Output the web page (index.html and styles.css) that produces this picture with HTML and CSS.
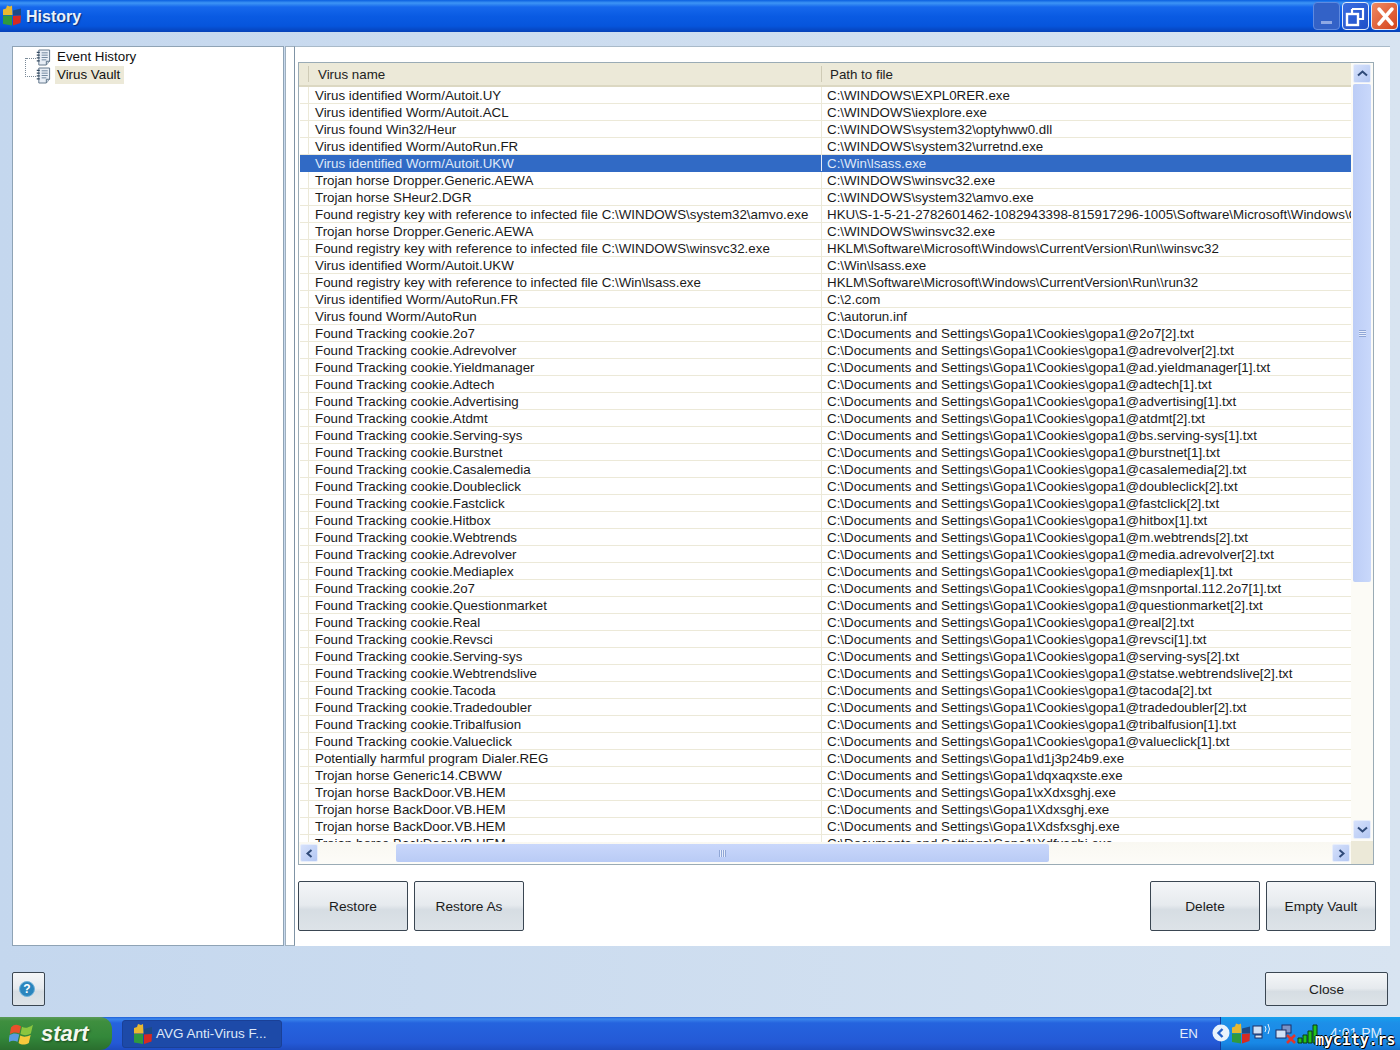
FILE: index.html
```html
<!DOCTYPE html>
<html lang="en">
<head>
<meta charset="utf-8">
<title>History</title>
<link rel="stylesheet" href="styles.css">
</head>
<body>
<svg class="defs" width="0" height="0" aria-hidden="true">
  <defs>
    <symbol id="avg" viewBox="0 0 20 20">
      <path d="M1 4 L4 3 L5 0 L8 1 L10 0 L10.500 9.500 L1 9.500Z" fill="#e8b830"/>
      <path d="M11 5 L19 3 L19 10 L11 10Z" fill="#1c4a86"/>
      <path d="M1 10 L10 10 L10 20 L1 18.500Z" fill="#2f9a3e"/>
      <path d="M11 10.500 L19 10 L18.500 17.500 L11 20Z" fill="#d62a22"/>
    </symbol>
    <symbol id="note" viewBox="0 0 16 17">
      <path d="M3 .5H14.500V12.500L11 16.500H3Z" fill="#e8eef6" stroke="#5d7288"/>
      <path d="M.8 3H4M.8 6H4M.8 9H4M.8 12H4" stroke="#33495f" stroke-width="1.300"/>
      <path d="M6 3.500H12.500M6 6H12.500M6 8.500H12.500M6 11H11" stroke="#6b829a"/>
      <path d="M11 16.500V12.500H14.500" fill="#c7d3df" stroke="#5d7288"/>
    </symbol>
    <symbol id="flag" viewBox="0 0 24 24">
      <path d="M2 6 C5 3 8 3 11.500 5 L10 12 C7 10.500 4 10.500 .8 12.500Z" fill="#e8502a"/>
      <path d="M12.500 5.500 C15 7 18 7 23 3.500 L21 12 C17.500 14 14 14 11 12.500Z" fill="#8cc63f"/>
      <path d="M.6 13.500 C4 11.500 6.500 11.500 9.800 13 L8.200 20 C5 18.500 2.500 18.500 -.8 20.500Z" fill="#5b9be0"/>
      <path d="M10.800 14 C13.500 15.500 16.500 15.500 20.800 13.500 L19 21 C15.500 23 12 23 9.200 21Z" fill="#f7c93c"/>
    </symbol>
  </defs>
</svg>

<header class="titlebar">
  <svg class="title-logo"><use href="#avg"/></svg>
  <span class="title-text">History</span>
  <div class="win-buttons">
    <div class="win-btn win-min"><i class="min-bar"></i></div>
    <div class="win-btn win-max">
      <svg width="24" height="24" viewBox="0 0 24 24"><path d="M8 5H19V15H15M8 5V9" fill="none" stroke="#fff" stroke-width="2.200"/><rect x="3" y="10" width="11" height="11" fill="none" stroke="#fff" stroke-width="2.400"/></svg>
    </div>
    <div class="win-btn win-close">
      <svg width="24" height="24" viewBox="0 0 24 24"><path d="M6 5L19 20M19 5L6 20" stroke="#fff" stroke-width="3.500" stroke-linecap="round"/></svg>
    </div>
  </div>
</header>

<main class="client">
  <div class="panes">
    <nav class="tree">
      <div class="tree-lines"></div>
      <div class="tree-item"><svg class="tree-icon"><use href="#note"/></svg><span class="tree-label">Event History</span></div>
      <div class="tree-item"><svg class="tree-icon"><use href="#note"/></svg><span class="tree-label tree-label-active">Virus Vault</span></div>
    </nav>
    <div class="splitter"></div>
    <section class="content">
      <div class="grid-box">
        <div class="grid-main">
          <div class="grid-head">
            <div class="cell-lead"></div>
            <div class="head-name">Virus name</div>
            <div class="head-path">Path to file</div>
          </div>
          <div class="grid-rows">
            <div class="row"><div class="cell-lead"></div><div class="cell-name">Virus identified Worm/Autoit.UY</div><div class="cell-path">C:\WINDOWS\EXPL0RER.exe</div></div>
            <div class="row"><div class="cell-lead"></div><div class="cell-name">Virus identified Worm/Autoit.ACL</div><div class="cell-path">C:\WINDOWS\iexplore.exe</div></div>
            <div class="row"><div class="cell-lead"></div><div class="cell-name">Virus found Win32/Heur</div><div class="cell-path">C:\WINDOWS\system32\optyhww0.dll</div></div>
            <div class="row"><div class="cell-lead"></div><div class="cell-name">Virus identified Worm/AutoRun.FR</div><div class="cell-path">C:\WINDOWS\system32\urretnd.exe</div></div>
            <div class="row row-selected"><div class="cell-lead"></div><div class="cell-name">Virus identified Worm/Autoit.UKW</div><div class="cell-path">C:\Win\lsass.exe</div></div>
            <div class="row"><div class="cell-lead"></div><div class="cell-name">Trojan horse Dropper.Generic.AEWA</div><div class="cell-path">C:\WINDOWS\winsvc32.exe</div></div>
            <div class="row"><div class="cell-lead"></div><div class="cell-name">Trojan horse SHeur2.DGR</div><div class="cell-path">C:\WINDOWS\system32\amvo.exe</div></div>
            <div class="row"><div class="cell-lead"></div><div class="cell-name">Found registry key with reference to infected file C:\WINDOWS\system32\amvo.exe</div><div class="cell-path">HKU\S-1-5-21-2782601462-1082943398-815917296-1005\Software\Microsoft\Windows\CurrentVersion\Run</div></div>
            <div class="row"><div class="cell-lead"></div><div class="cell-name">Trojan horse Dropper.Generic.AEWA</div><div class="cell-path">C:\WINDOWS\winsvc32.exe</div></div>
            <div class="row"><div class="cell-lead"></div><div class="cell-name">Found registry key with reference to infected file C:\WINDOWS\winsvc32.exe</div><div class="cell-path">HKLM\Software\Microsoft\Windows\CurrentVersion\Run\\winsvc32</div></div>
            <div class="row"><div class="cell-lead"></div><div class="cell-name">Virus identified Worm/Autoit.UKW</div><div class="cell-path">C:\Win\lsass.exe</div></div>
            <div class="row"><div class="cell-lead"></div><div class="cell-name">Found registry key with reference to infected file C:\Win\lsass.exe</div><div class="cell-path">HKLM\Software\Microsoft\Windows\CurrentVersion\Run\\run32</div></div>
            <div class="row"><div class="cell-lead"></div><div class="cell-name">Virus identified Worm/AutoRun.FR</div><div class="cell-path">C:\2.com</div></div>
            <div class="row"><div class="cell-lead"></div><div class="cell-name">Virus found Worm/AutoRun</div><div class="cell-path">C:\autorun.inf</div></div>
            <div class="row"><div class="cell-lead"></div><div class="cell-name">Found Tracking cookie.2o7</div><div class="cell-path">C:\Documents and Settings\Gopa1\Cookies\gopa1@2o7[2].txt</div></div>
            <div class="row"><div class="cell-lead"></div><div class="cell-name">Found Tracking cookie.Adrevolver</div><div class="cell-path">C:\Documents and Settings\Gopa1\Cookies\gopa1@adrevolver[2].txt</div></div>
            <div class="row"><div class="cell-lead"></div><div class="cell-name">Found Tracking cookie.Yieldmanager</div><div class="cell-path">C:\Documents and Settings\Gopa1\Cookies\gopa1@ad.yieldmanager[1].txt</div></div>
            <div class="row"><div class="cell-lead"></div><div class="cell-name">Found Tracking cookie.Adtech</div><div class="cell-path">C:\Documents and Settings\Gopa1\Cookies\gopa1@adtech[1].txt</div></div>
            <div class="row"><div class="cell-lead"></div><div class="cell-name">Found Tracking cookie.Advertising</div><div class="cell-path">C:\Documents and Settings\Gopa1\Cookies\gopa1@advertising[1].txt</div></div>
            <div class="row"><div class="cell-lead"></div><div class="cell-name">Found Tracking cookie.Atdmt</div><div class="cell-path">C:\Documents and Settings\Gopa1\Cookies\gopa1@atdmt[2].txt</div></div>
            <div class="row"><div class="cell-lead"></div><div class="cell-name">Found Tracking cookie.Serving-sys</div><div class="cell-path">C:\Documents and Settings\Gopa1\Cookies\gopa1@bs.serving-sys[1].txt</div></div>
            <div class="row"><div class="cell-lead"></div><div class="cell-name">Found Tracking cookie.Burstnet</div><div class="cell-path">C:\Documents and Settings\Gopa1\Cookies\gopa1@burstnet[1].txt</div></div>
            <div class="row"><div class="cell-lead"></div><div class="cell-name">Found Tracking cookie.Casalemedia</div><div class="cell-path">C:\Documents and Settings\Gopa1\Cookies\gopa1@casalemedia[2].txt</div></div>
            <div class="row"><div class="cell-lead"></div><div class="cell-name">Found Tracking cookie.Doubleclick</div><div class="cell-path">C:\Documents and Settings\Gopa1\Cookies\gopa1@doubleclick[2].txt</div></div>
            <div class="row"><div class="cell-lead"></div><div class="cell-name">Found Tracking cookie.Fastclick</div><div class="cell-path">C:\Documents and Settings\Gopa1\Cookies\gopa1@fastclick[2].txt</div></div>
            <div class="row"><div class="cell-lead"></div><div class="cell-name">Found Tracking cookie.Hitbox</div><div class="cell-path">C:\Documents and Settings\Gopa1\Cookies\gopa1@hitbox[1].txt</div></div>
            <div class="row"><div class="cell-lead"></div><div class="cell-name">Found Tracking cookie.Webtrends</div><div class="cell-path">C:\Documents and Settings\Gopa1\Cookies\gopa1@m.webtrends[2].txt</div></div>
            <div class="row"><div class="cell-lead"></div><div class="cell-name">Found Tracking cookie.Adrevolver</div><div class="cell-path">C:\Documents and Settings\Gopa1\Cookies\gopa1@media.adrevolver[2].txt</div></div>
            <div class="row"><div class="cell-lead"></div><div class="cell-name">Found Tracking cookie.Mediaplex</div><div class="cell-path">C:\Documents and Settings\Gopa1\Cookies\gopa1@mediaplex[1].txt</div></div>
            <div class="row"><div class="cell-lead"></div><div class="cell-name">Found Tracking cookie.2o7</div><div class="cell-path">C:\Documents and Settings\Gopa1\Cookies\gopa1@msnportal.112.2o7[1].txt</div></div>
            <div class="row"><div class="cell-lead"></div><div class="cell-name">Found Tracking cookie.Questionmarket</div><div class="cell-path">C:\Documents and Settings\Gopa1\Cookies\gopa1@questionmarket[2].txt</div></div>
            <div class="row"><div class="cell-lead"></div><div class="cell-name">Found Tracking cookie.Real</div><div class="cell-path">C:\Documents and Settings\Gopa1\Cookies\gopa1@real[2].txt</div></div>
            <div class="row"><div class="cell-lead"></div><div class="cell-name">Found Tracking cookie.Revsci</div><div class="cell-path">C:\Documents and Settings\Gopa1\Cookies\gopa1@revsci[1].txt</div></div>
            <div class="row"><div class="cell-lead"></div><div class="cell-name">Found Tracking cookie.Serving-sys</div><div class="cell-path">C:\Documents and Settings\Gopa1\Cookies\gopa1@serving-sys[2].txt</div></div>
            <div class="row"><div class="cell-lead"></div><div class="cell-name">Found Tracking cookie.Webtrendslive</div><div class="cell-path">C:\Documents and Settings\Gopa1\Cookies\gopa1@statse.webtrendslive[2].txt</div></div>
            <div class="row"><div class="cell-lead"></div><div class="cell-name">Found Tracking cookie.Tacoda</div><div class="cell-path">C:\Documents and Settings\Gopa1\Cookies\gopa1@tacoda[2].txt</div></div>
            <div class="row"><div class="cell-lead"></div><div class="cell-name">Found Tracking cookie.Tradedoubler</div><div class="cell-path">C:\Documents and Settings\Gopa1\Cookies\gopa1@tradedoubler[2].txt</div></div>
            <div class="row"><div class="cell-lead"></div><div class="cell-name">Found Tracking cookie.Tribalfusion</div><div class="cell-path">C:\Documents and Settings\Gopa1\Cookies\gopa1@tribalfusion[1].txt</div></div>
            <div class="row"><div class="cell-lead"></div><div class="cell-name">Found Tracking cookie.Valueclick</div><div class="cell-path">C:\Documents and Settings\Gopa1\Cookies\gopa1@valueclick[1].txt</div></div>
            <div class="row"><div class="cell-lead"></div><div class="cell-name">Potentially harmful program Dialer.REG</div><div class="cell-path">C:\Documents and Settings\Gopa1\d1j3p24b9.exe</div></div>
            <div class="row"><div class="cell-lead"></div><div class="cell-name">Trojan horse Generic14.CBWW</div><div class="cell-path">C:\Documents and Settings\Gopa1\dqxaqxste.exe</div></div>
            <div class="row"><div class="cell-lead"></div><div class="cell-name">Trojan horse BackDoor.VB.HEM</div><div class="cell-path">C:\Documents and Settings\Gopa1\xXdxsghj.exe</div></div>
            <div class="row"><div class="cell-lead"></div><div class="cell-name">Trojan horse BackDoor.VB.HEM</div><div class="cell-path">C:\Documents and Settings\Gopa1\Xdxsghj.exe</div></div>
            <div class="row"><div class="cell-lead"></div><div class="cell-name">Trojan horse BackDoor.VB.HEM</div><div class="cell-path">C:\Documents and Settings\Gopa1\Xdsfxsghj.exe</div></div>
            <div class="row"><div class="cell-lead"></div><div class="cell-name">Trojan horse BackDoor.VB.HEM</div><div class="cell-path">C:\Documents and Settings\Gopa1\Xdfxsghj.exe</div></div>
          </div>
          <div class="hscroll">
            <div class="sb-btn sb-btn-h"><svg width="9" height="9" viewBox="0 0 9 9"><path d="M6.500 1L2.500 4.500L6.500 8" class="sb-arrow"/></svg></div>
            <div class="hscroll-gap"></div>
            <div class="hscroll-thumb"><i class="grip-h"></i></div>
            <div class="hscroll-rest"></div>
            <div class="sb-btn sb-btn-h"><svg width="9" height="9" viewBox="0 0 9 9"><path d="M2.500 1L6.500 4.500L2.500 8" class="sb-arrow"/></svg></div>
          </div>
        </div>
        <div class="vscroll">
          <div class="sb-btn sb-btn-v"><svg width="11" height="9" viewBox="0 0 11 9"><path d="M1 6.500L5.500 2.500L10 6.500" class="sb-arrow"/></svg></div>
          <div class="vscroll-thumb"><i class="grip-v"></i></div>
          <div class="vscroll-rest"></div>
          <div class="sb-btn sb-btn-v"><svg width="11" height="9" viewBox="0 0 11 9"><path d="M1 2.500L5.500 6.500L10 2.500" class="sb-arrow"/></svg></div>
          <div class="vscroll-corner"></div>
        </div>
      </div>
      <div class="actions">
        <button class="btn btn-action">Restore</button>
        <button class="btn btn-action">Restore As</button>
        <div class="actions-gap"></div>
        <button class="btn btn-action">Delete</button>
        <button class="btn btn-action">Empty Vault</button>
      </div>
    </section>
  </div>
  <div class="footer">
    <button class="btn btn-help" aria-label="Help">
      <svg width="18" height="18" viewBox="0 0 18 18"><circle cx="9" cy="9" r="7.500" fill="#2a85bd"/><circle cx="9" cy="9" r="7.500" fill="none" stroke="#6fb2da"/><text x="9" y="13" class="help-mark">?</text></svg>
    </button>
    <button class="btn btn-close">Close</button>
  </div>
</main>

<footer class="taskbar">
  <div class="start"><svg class="start-flag"><use href="#flag"/></svg><span class="start-text">start</span></div>
  <div class="task"><svg class="task-logo"><use href="#avg"/></svg><span class="task-text">AVG Anti-Virus F...</span></div>
  <div class="task-spacer"></div>
  <span class="lang">EN</span>
  <div class="tray-toggle"><svg width="18" height="18" viewBox="0 0 18 18"><circle cx="9" cy="9" r="8.500" fill="#e8f2fc"/><path d="M10.500 5L6.500 9L10.500 13" fill="none" stroke="#1f5fc9" stroke-width="2.400"/></svg></div>
  <div class="tray">
    <svg class="tray-icon tray-avg"><use href="#avg"/></svg>
    <svg class="tray-icon tray-net" viewBox="0 0 20 18"><rect x="1" y="3" width="9" height="8" fill="#cfe0f5" stroke="#1c2f66"/><rect x="3" y="12" width="7" height="3" fill="#dfe7f2" stroke="#1c2f66"/><path d="M13 3Q15 6 13 9M16 1Q19 6 16 11" fill="none" stroke="#e6effa"/></svg>
    <svg class="tray-icon tray-net2" viewBox="0 0 22 20"><rect x="7" y="1" width="9" height="8" fill="#7c93c6" stroke="#1c2f66"/><rect x="1" y="6" width="10" height="8" fill="#cfe0f5" stroke="#1c2f66"/><path d="M12 11L20 19M20 11L12 19" stroke="#e3362a" stroke-width="2.500"/></svg>
    <svg class="tray-icon tray-signal" viewBox="0 0 22 20"><path d="M1 14h4v5H1ZM6 11h4v8H6ZM11 7h4v12h-4ZM16 1h4v18h-4Z" fill="#22c31c" stroke="#0c3a10"/></svg>
    <span class="clock">4:01 PM</span>
    <span class="watermark">mycity.rs</span>
  </div>
</footer>
</body>
</html>
```

FILE: styles.css
```css
* { box-sizing: border-box; }
html, body { margin: 0; padding: 0; }
body {
  width: 1400px;
  height: 1050px;
  overflow: hidden;
  display: flex;
  flex-direction: column;
  font-family: "Liberation Sans", Arial, sans-serif;
  font-size: 13.33px;
  color: #1a1a1a;
}
.defs { position: absolute; }

/* Title bar */
.titlebar {
  flex: 0 0 32px;
  display: flex;
  align-items: center;
  padding-left: 2px;
  background: linear-gradient(to bottom, #0a5fe0 0, #3d95f5 3px, #1668ec 7px, #0a5be3 16px, #0655dc 26px, #0641b8 32px);
}
.title-logo { width: 20px; height: 21px; flex: none; margin-top: -2px; }
.title-text {
  margin: 2px 0 0 4px;
  color: #eaf2fb;
  font-size: 16px;
  font-weight: bold;
  text-shadow: 1px 1px 1px #0a2c78;
}
.win-buttons { margin-left: auto; display: flex; gap: 2px; padding-right: 2px; }
.win-btn {
  width: 27px;
  height: 28px;
  border: 1px solid #e4ecf9;
  border-radius: 4px;
  display: flex;
  align-items: center;
  justify-content: center;
}
.win-min { background: #3362c7; border-color: #5f8ae0; }
.min-bar { display: block; width: 11px; height: 3px; background: #8fa9e4; margin-top: 13px; }
.win-max { background: linear-gradient(135deg, #3a6de0, #1e4fc8); }
.win-close { background: linear-gradient(135deg, #ee8a63, #d5431c); }

/* Client area */
.client {
  flex: 1;
  display: flex;
  flex-direction: column;
  padding: 14px 10px 0 12px;
  background: linear-gradient(to right, #c4d7ee, #d8e4f1);
}
.panes { flex: 0 0 900px; display: flex; }
.tree {
  flex: 0 0 272px;
  position: relative;
  padding: 2px 0 0 23px;
  background: #fff;
  border: 1px solid #8fa3b5;
}
.tree-lines {
  position: absolute;
  left: 12px;
  top: 11px;
  width: 11px;
  height: 19px;
  border-left: 1px dotted #7a8a98;
  border-bottom: 1px dotted #7a8a98;
}
.tree-lines::before {
  content: "";
  position: absolute;
  left: 0;
  top: 0;
  width: 10px;
  border-top: 1px dotted #7a8a98;
}
.tree-item { height: 18px; display: flex; align-items: flex-start; }
.tree-icon { width: 15px; height: 17px; flex: none; }
.tree-label { margin: -1px 0 0 4px; padding: 0 4px 0 2px; line-height: 18px; color: #111; }
.tree-label-active { background: #ece9d8; }
.splitter {
  flex: 0 0 10px;
  margin-left: 1px;
  background: #fff;
  border: 1px solid #9fb0bf;
  border-right-color: #7f93a5;
}
.content {
  flex: 1;
  background: #fff;
  border-top: 1px solid #a9bac9;
  padding: 15px 14px 0 3px;
  display: flex;
  flex-direction: column;
}

/* Grid */
.grid-box {
  width: 1076px;
  height: 803px;
  display: flex;
  border: 1px solid #9aabb5;
}
.grid-main { flex: 0 0 1052px; display: flex; flex-direction: column; min-width: 0; }
.grid-head {
  flex: 0 0 24px;
  display: flex;
  background: #ece9d8;
  border-bottom: 2px solid #dcd8c2;
  align-items: stretch;
  color: #222;
}
.grid-head .cell-lead { flex: 0 0 10px; border-right: 1px solid #cfcbb6; margin: 3px 0; }
.head-name { flex: 0 0 513px; padding-left: 9px; border-right: 1px solid #cfcbb6; margin: 3px 0; line-height: 18px; height: 16px; }
.head-path { flex: 1; padding-left: 8px; margin: 3px 0; line-height: 18px; height: 16px; }
.grid-rows { flex: 0 0 755px; overflow: hidden; background: #fff; padding-left: 1px; }
.row {
  height: 17px;
  display: flex;
  line-height: 16px;
  white-space: nowrap;
  border-bottom: 1px solid #ece9d8;
  overflow: hidden;
}
.cell-lead { flex: 0 0 9px; }
.row .cell-lead { border-right: 1px solid #ece9d8; }
.cell-name { flex: 0 0 513px; padding: 1px 0 0 6px; border-right: 1px solid #ece9d8; overflow: hidden; }
.cell-path { flex: 1; padding: 1px 0 0 5px; overflow: hidden; }
.row-selected { background: #316ac5; color: #dfe8f8; border-bottom-color: #316ac5; }
.row-selected .cell-lead { border-right-color: #316ac5; }
.row-selected .cell-name { border-right-color: #e9eef8; }

/* Scroll bars */
.hscroll {
  flex: 0 0 22px;
  display: flex;
  align-items: center;
  padding: 0 1px 0 1px;
  background: linear-gradient(to bottom, #f9f8f2, #fdfcf8);
}
.hscroll-gap { flex: 0 0 78px; }
.hscroll-thumb {
  flex: 0 0 653px;
  height: 18px;
  background: linear-gradient(to bottom, #c9d7fb, #b9cbf5);
  border-radius: 2px;
  display: flex;
  align-items: center;
  justify-content: center;
}
.hscroll-rest { flex: 1; }
.sb-btn {
  flex: none;
  display: flex;
  align-items: center;
  justify-content: center;
  background: linear-gradient(135deg, #d6e1fb, #b3c7f3);
  border: 1px solid #e8eefb;
  border-radius: 2px;
}
.sb-btn-h { width: 18px; height: 18px; }
.sb-btn-v { width: 18px; height: 19px; margin: 1px 0 0 2px; }
.sb-arrow { fill: none; stroke: #2f4a78; stroke-width: 2; }
.vscroll {
  flex: 1;
  display: flex;
  flex-direction: column;
  background: #fcfbf6;
}
.vscroll-thumb {
  flex: 0 0 498px;
  margin: 1px 0 0 2px;
  width: 18px;
  background: linear-gradient(to right, #bccdf6, #c9d8fb);
  border-radius: 2px;
  display: flex;
  align-items: center;
  justify-content: center;
}
.vscroll-rest { flex: 1; }
.vscroll-corner { flex: 0 0 23px; margin-top: 2px; background: #ece9d8; }
.grip-v { display: block; width: 7px; height: 7px; background: repeating-linear-gradient(to bottom, #8fa6d6 0, #8fa6d6 1px, #e6edfc 1px, #e6edfc 2px); }
.grip-h { display: block; width: 7px; height: 7px; background: repeating-linear-gradient(to right, #8fa6d6 0, #8fa6d6 1px, #e6edfc 1px, #e6edfc 2px); }

/* Buttons */
.btn {
  font: inherit;
  font-size: 13.7px;
  color: #1c1c1c;
  padding: 0;
  border: 1px solid #3a4652;
  border-radius: 2px;
  background: linear-gradient(to bottom, #f4f6f8 0, #e6eaee 48%, #d6dde3 58%, #dde3e8 100%);
}
.actions { display: flex; gap: 6px; margin-top: 16px; width: 1078px; }
.btn-action { flex: 0 0 110px; height: 50px; }
.actions-gap { flex: 1; }
.footer {
  display: flex;
  justify-content: space-between;
  padding-top: 26px;
}
.btn-help { width: 33px; height: 34px; display: flex; align-items: center; justify-content: center; padding-right: 3px; }
.btn-close { width: 123px; height: 34px; margin-right: 2px; }
.help-mark { font-size: 12px; font-weight: bold; fill: #fff; text-anchor: middle; font-family: "Liberation Sans", sans-serif; }

/* Taskbar */
.taskbar {
  flex: 0 0 33px;
  display: flex;
  align-items: center;
  background: linear-gradient(to bottom, #1f5fd8 0, #3a86ec 2px, #2563de 6px, #2459d6 26px, #1e4cc0 33px);
  color: #e8effa;
}
.start {
  flex: 0 0 112px;
  height: 33px;
  display: flex;
  align-items: center;
  padding-left: 9px;
  border-radius: 0 12px 12px 0;
  background: linear-gradient(to bottom, #5a9a58 0, #3f8f3f 4px, #33883a 20px, #2a6e2e 33px);
}
.start-flag { width: 25px; height: 25px; flex: none; }
.start-text {
  margin-left: 7px;
  font-size: 22px;
  font-weight: bold;
  font-style: italic;
  color: #f4f8ef;
  text-shadow: 1px 1px 2px #1a4a1e;
}
.task {
  flex: 0 0 160px;
  height: 28px;
  margin-left: 10px;
  display: flex;
  align-items: center;
  padding-left: 10px;
  border-radius: 3px;
  background: #1d4aa8;
  border: 1px solid #1a4096;
}
.task-logo { width: 20px; height: 22px; flex: none; }
.task-text { margin-left: 3px; font-size: 13.5px; color: #dfe8f8; }
.task-spacer { flex: 1; }
.lang { font-size: 13.33px; color: #e4ecfa; margin-right: 12px; }
.tray-toggle { width: 20px; height: 20px; margin-right: -10px; position: relative; z-index: 1; display: flex; justify-content: flex-end; }
.tray {
  flex: 0 0 180px;
  height: 33px;
  position: relative;
  display: flex;
  align-items: center;
  padding-left: 10px;
  background: linear-gradient(to bottom, #16a0ee 0, #1d8fe8 6px, #1888e6 26px, #1270cc 33px);
  border-left: 1px solid #123c9c;
}
.tray-icon { flex: none; }
.tray-avg { width: 20px; height: 21px; }
.tray-net { width: 20px; height: 18px; margin-left: 1px; margin-bottom: 4px; }
.tray-net2 { width: 22px; height: 20px; margin-left: 3px; }
.tray-signal { width: 22px; height: 20px; }
.clock { margin: 0 0 2px 11px; font-size: 14px; color: #dcebfa; white-space: nowrap; }
.watermark {
  position: absolute;
  left: 94px;
  bottom: 1px;
  font-family: "DejaVu Sans Mono", monospace;
  font-size: 15px;
  font-weight: bold;
  line-height: 17px;
  color: #fff;
  letter-spacing: -.1px;
  text-shadow: 1px 1px 0 #000, -1px 0 0 #000, 0 -1px 0 #000;
  white-space: nowrap;
}
```
